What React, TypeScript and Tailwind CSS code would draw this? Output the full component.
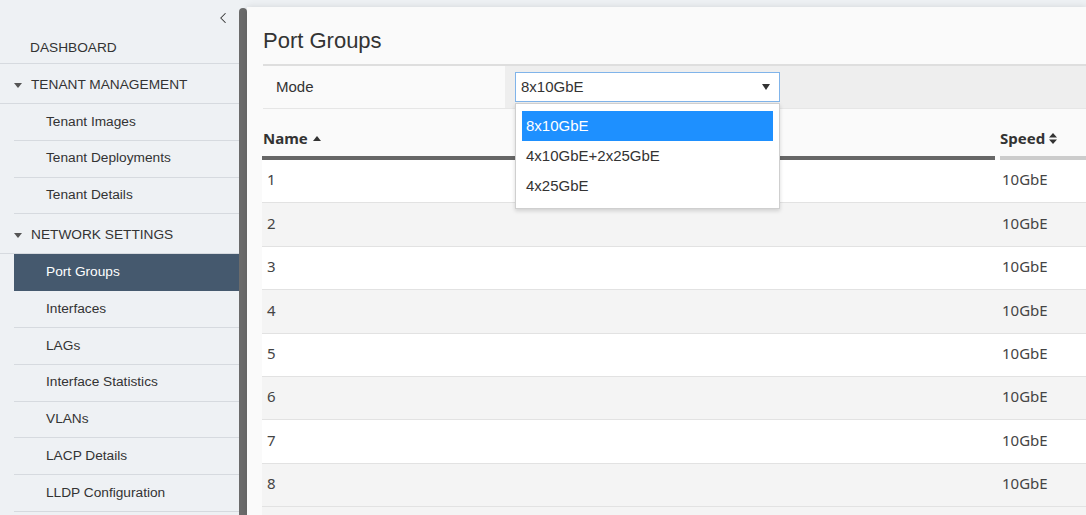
import { ChevronLeft } from "lucide-react";

const tenantItems = ["Tenant Images", "Tenant Deployments", "Tenant Details"];
const networkItems = [
  "Port Groups",
  "Interfaces",
  "LAGs",
  "Interface Statistics",
  "VLANs",
  "LACP Details",
  "LLDP Configuration",
];
const modes = ["8x10GbE", "4x10GbE+2x25GbE", "4x25GbE"];
const ports = [1, 2, 3, 4, 5, 6, 7, 8];

function Caret() {
  return (
    <svg width="8" height="5" viewBox="0 0 8 5" className="mr-[9px] shrink-0">
      <path d="M0 0h8L4 5z" fill="#555" />
    </svg>
  );
}

function SectionRow({ label, open, h }: { label: string; open?: boolean; h: string }) {
  return (
    <div
      className={`flex items-center border-b border-[#d6dadf] pt-[3px] ${h} ${
        open ? "pl-[14px]" : "pl-[30px]"
      }`}
    >
      {open && <Caret />}
      <span>{label}</span>
    </div>
  );
}

function SubItem({ label, active }: { label: string; active?: boolean }) {
  return (
    <div
      className={`ml-[14px] flex h-[36.8px] items-center border-b pl-[32px] ${
        active ? "border-[#45596e] bg-[#45596e] text-white" : "border-[#d6dadf]"
      }`}
    >
      {label}
    </div>
  );
}

function Sidebar() {
  return (
    <aside className="flex w-[247px] shrink-0">
      <nav className="w-[239px] text-[13.7px] text-[#333]">
        <div className="flex h-[31px] items-start justify-end pr-[7px] pt-[9px]">
          <ChevronLeft size={18} strokeWidth={1.4} color="#333" />
        </div>
        <SectionRow label="DASHBOARD" h="h-[33px]" />
        <SectionRow label="TENANT MANAGEMENT" open h="h-[40px]" />
        {tenantItems.map((t) => (
          <SubItem key={t} label={t} />
        ))}
        <SectionRow label="NETWORK SETTINGS" open h="h-[40px]" />
        {networkItems.map((t) => (
          <SubItem key={t} label={t} active={t === "Port Groups"} />
        ))}
      </nav>
      <div className="w-[8px] pt-[8px]">
        <div className="h-full rounded-t-[4px] bg-[#6b6b6b]" />
      </div>
    </aside>
  );
}

function SortUp() {
  return (
    <svg width="8" height="5" viewBox="0 0 8 5" className="ml-[5px]">
      <path d="M0 5h8L4 0z" fill="#333" />
    </svg>
  );
}

function SortBoth() {
  return (
    <svg width="8" height="11" viewBox="0 0 8 11" className="ml-[4px]">
      <path d="M0 4.5h8L4 0z M0 6.5h8L4 11z" fill="#333" />
    </svg>
  );
}

function ModeRow() {
  return (
    <div className="flex h-[45px] border-t-2 border-b border-t-[#dedede] border-b-[#e6e6e6] text-[15px] text-[#333]">
      <div className="flex w-[242px] items-center pl-[13px]">Mode</div>
      <div className="relative flex flex-1 items-center bg-[#eeeeee] pl-[10px]">
        <div className="flex h-[30px] w-[265px] items-center justify-between border border-[#80b4ea] bg-white pl-[5px] pr-[9px]">
          <span>8x10GbE</span>
          <svg width="8" height="6" viewBox="0 0 8 6">
            <path d="M0 0h8L4 6z" fill="#333" />
          </svg>
        </div>
        <div className="absolute left-[10px] top-[37px] z-10 w-[265px] border border-[#cfcfcf] bg-white px-[6px] pb-[7px] pt-[7px] shadow-[0_2px_4px_rgba(0,0,0,0.15)]">
          {modes.map((m, i) => (
            <div
              key={m}
              className={`flex h-[30px] items-center pl-[4px] ${
                i === 0 ? "bg-[#1e90ff] text-white" : "text-[#333]"
              }`}
            >
              {m}
            </div>
          ))}
        </div>
      </div>
    </div>
  );
}

function PortTable() {
  return (
    <div className="-ml-[1px] font-['Noto_Sans',sans-serif] text-[15px]">
      <div className="grid h-[51px] grid-cols-[733px_5px_1fr] items-end font-bold text-[#333]">
        <div className="flex h-full flex-col justify-end">
          <div className="flex items-center pb-[8px] pl-[1px] leading-[20px]">
            Name
            <SortUp />
          </div>
          <div className="h-[4px] bg-[#666]" />
        </div>
        <div />
        <div className="flex h-full flex-col justify-end">
          <div className="flex items-center pb-[8px] leading-[20px]">
            Speed
            <SortBoth />
          </div>
          <div className="h-[4px] bg-[#cccccc]" />
        </div>
      </div>
      {ports.map((p, i) => (
        <div
          key={p}
          className={`grid h-[43.4px] grid-cols-[733px_5px_1fr] items-center border-b border-[#e2e2e2] pb-[3px] text-[#444] ${
            i % 2 === 0 ? "bg-white" : "bg-[#f4f4f4]"
          }`}
        >
          <div className="pl-[5px]">{p}</div>
          <div />
          <div className="pl-[2px]">10GbE</div>
        </div>
      ))}
      <div className="h-[20px] bg-[#f4f4f4]" />
    </div>
  );
}

export default function App() {
  return (
    <div className="flex h-[515px] w-[1086px] overflow-hidden bg-[#eef1f4] font-['Liberation_Sans',Arial,sans-serif]">
      <Sidebar />
      <main className="mt-[7px] flex-1 bg-[#fafafa] pl-[16px] shadow-[0_0_7px_rgba(0,0,0,0.12)]">
        <h1 className="pb-[9px] pt-[20px] text-[22px] leading-[28px] text-[#333]">Port Groups</h1>
        <ModeRow />
        <PortTable />
      </main>
    </div>
  );
}
